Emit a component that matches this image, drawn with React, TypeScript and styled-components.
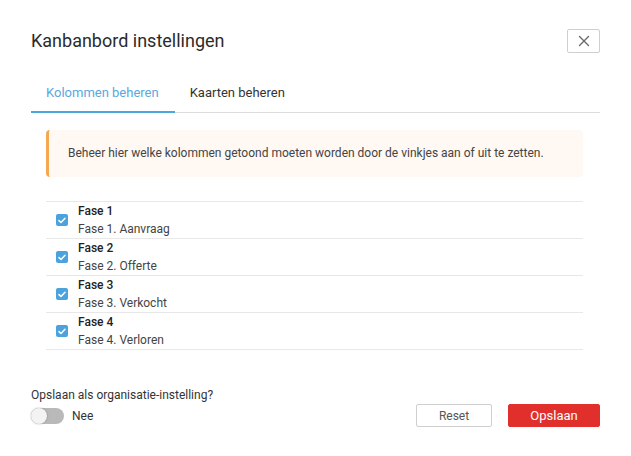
import React, { useState } from "react";
import styled, { createGlobalStyle } from "styled-components";

const Global = createGlobalStyle`
  html, body { margin: 0; padding: 0; background: #fff; }
  body { font-family: Roboto, "Liberation Sans", Arial, sans-serif; color: #333; }
  * { box-sizing: border-box; }
`;

const Dialog = styled.div`
  width: 631px;
  padding: 29px 31px 0 31px;
`;

const Header = styled.div`
  display: flex;
  justify-content: space-between;
  align-items: center;
  height: 24px;
`;

const Title = styled.h1`
  margin: 0;
  font-size: 18px;
  font-weight: 400;
  line-height: 24px;
  color: #2b2b2b;
`;

const CloseButton = styled.button`
  width: 33px;
  height: 24px;
  border: 1px solid #cfcfcf;
  border-radius: 2px;
  background: #fff;
  padding: 0;
  display: flex;
  align-items: center;
  justify-content: center;
  cursor: pointer;
`;

const TabList = styled.div`
  display: flex;
  margin-top: 31px;
  border-bottom: 1px solid #dcdcdc;
`;

const Tab = styled.div<{ $active?: boolean }>`
  padding: 0 16px 9px 15px;
  font-size: 13px;
  line-height: 18px;
  margin-bottom: -1px;
  border-bottom: 2px solid ${(p) => (p.$active ? "#4ea6df" : "transparent")};
  color: ${(p) => (p.$active ? "#5aa8de" : "#333")};
  cursor: pointer;
`;

const Body = styled.div`
  margin: 0 17px 0 15px;
`;

const Alert = styled.div`
  margin-top: 17px;
  background: #fff8f3;
  border-left: 3px solid #f5a850;
  border-radius: 4px;
  padding: 14px 20px 15px 19px;
  font-size: 12px;
  line-height: 18px;
  color: #444;
`;

const List = styled.div`
  margin-top: 24px;
  border-bottom: 1px solid #e8e8e8;
`;

const Row = styled.label`
  display: flex;
  align-items: center;
  gap: 10px;
  height: 37px;
  padding-left: 10px;
  border-top: 1px solid #e8e8e8;
  cursor: pointer;
`;

const Box = styled.span<{ $checked: boolean }>`
  width: 12px;
  height: 12px;
  border-radius: 2px;
  background: ${(p) => (p.$checked ? "#4ca2dc" : "#fff")};
  border: ${(p) => (p.$checked ? "none" : "1px solid #bbb")};
  display: flex;
  align-items: center;
  justify-content: center;
  flex: none;
`;

const Texts = styled.div`
  display: flex;
  flex-direction: column;
  font-size: 12px;
  line-height: 18px;
`;

const Name = styled.span`
  font-weight: 500;
  color: #222;
`;

const Desc = styled.span`
  color: #444;
`;

const Footer = styled.div`
  display: flex;
  justify-content: space-between;
  align-items: flex-start;
  margin-top: 36px;
`;

const SettingCol = styled.div`
  display: flex;
  flex-direction: column;
`;

const SettingLabel = styled.div`
  font-size: 12px;
  line-height: 18px;
  color: #333;
`;

const ToggleRow = styled.div`
  display: flex;
  align-items: center;
  gap: 8px;
  margin-top: 3px;
  font-size: 12px;
  line-height: 18px;
  color: #333;
`;

const Track = styled.span<{ $on: boolean }>`
  position: relative;
  width: 33px;
  height: 16px;
  border-radius: 8px;
  background: ${(p) => (p.$on ? "#4ca2dc" : "#b9b9b9")};
  cursor: pointer;
`;

const Knob = styled.span<{ $on: boolean }>`
  position: absolute;
  top: 0;
  left: ${(p) => (p.$on ? "17px" : "0")};
  width: 16px;
  height: 16px;
  border-radius: 50%;
  background: #f3f3f3;
  box-shadow: 0 0 2px rgba(0, 0, 0, 0.3);
`;

const Buttons = styled.div`
  display: flex;
  gap: 16px;
  margin-top: 18px;
`;

const Button = styled.button<{ $primary?: boolean }>`
  height: 23px;
  width: ${(p) => (p.$primary ? "92px" : "76px")};
  border-radius: 2px;
  border: 1px solid ${(p) => (p.$primary ? "#e1302b" : "#cfcfcf")};
  background: ${(p) => (p.$primary ? "#e1302b" : "#fff")};
  color: ${(p) => (p.$primary ? "#fff" : "#555")};
  font-family: Roboto, "Liberation Sans", Arial, sans-serif;
  font-size: ${(p) => (p.$primary ? "13px" : "12px")};
  padding: 0;
  cursor: pointer;
`;

const phases = [
  { name: "Fase 1", desc: "Fase 1. Aanvraag" },
  { name: "Fase 2", desc: "Fase 2. Offerte" },
  { name: "Fase 3", desc: "Fase 3. Verkocht" },
  { name: "Fase 4", desc: "Fase 4. Verloren" },
];

const Check = () => (
  <svg width="8" height="7" viewBox="0 0 8 7">
    <path d="M1 3.6 L3 5.5 L7 1.3" fill="none" stroke="#fff" strokeWidth="1.5" strokeLinecap="round" strokeLinejoin="round" />
  </svg>
);

export default function App() {
  const [checked, setChecked] = useState([true, true, true, true]);
  const [org, setOrg] = useState(false);
  return (
    <>
      <Global />
      <Dialog>
        <Header>
          <Title>Kanbanbord instellingen</Title>
          <CloseButton aria-label="Sluiten">
            <svg width="12" height="12" viewBox="0 0 12 12">
              <path d="M1.5 1.5 L10.5 10.5 M10.5 1.5 L1.5 10.5" stroke="#6b6b6b" strokeWidth="1.4" strokeLinecap="round" />
            </svg>
          </CloseButton>
        </Header>
        <TabList>
          <Tab $active>Kolommen beheren</Tab>
          <Tab>Kaarten beheren</Tab>
        </TabList>
        <Body>
          <Alert>
            Beheer hier welke kolommen getoond moeten worden door de vinkjes aan of uit te zetten.
          </Alert>
          <List>
            {phases.map((p, i) => (
              <Row
                key={p.name}
                onClick={() => setChecked((c) => c.map((v, j) => (j === i ? !v : v)))}
              >
                <Box $checked={checked[i]}>{checked[i] && <Check />}</Box>
                <Texts>
                  <Name>{p.name}</Name>
                  <Desc>{p.desc}</Desc>
                </Texts>
              </Row>
            ))}
          </List>
        </Body>
        <Footer>
          <SettingCol>
            <SettingLabel>Opslaan als organisatie-instelling?</SettingLabel>
            <ToggleRow>
              <Track $on={org} onClick={() => setOrg(!org)}>
                <Knob $on={org} />
              </Track>
              <span>{org ? "Ja" : "Nee"}</span>
            </ToggleRow>
          </SettingCol>
          <Buttons>
            <Button>Reset</Button>
            <Button $primary>Opslaan</Button>
          </Buttons>
        </Footer>
      </Dialog>
    </>
  );
}
